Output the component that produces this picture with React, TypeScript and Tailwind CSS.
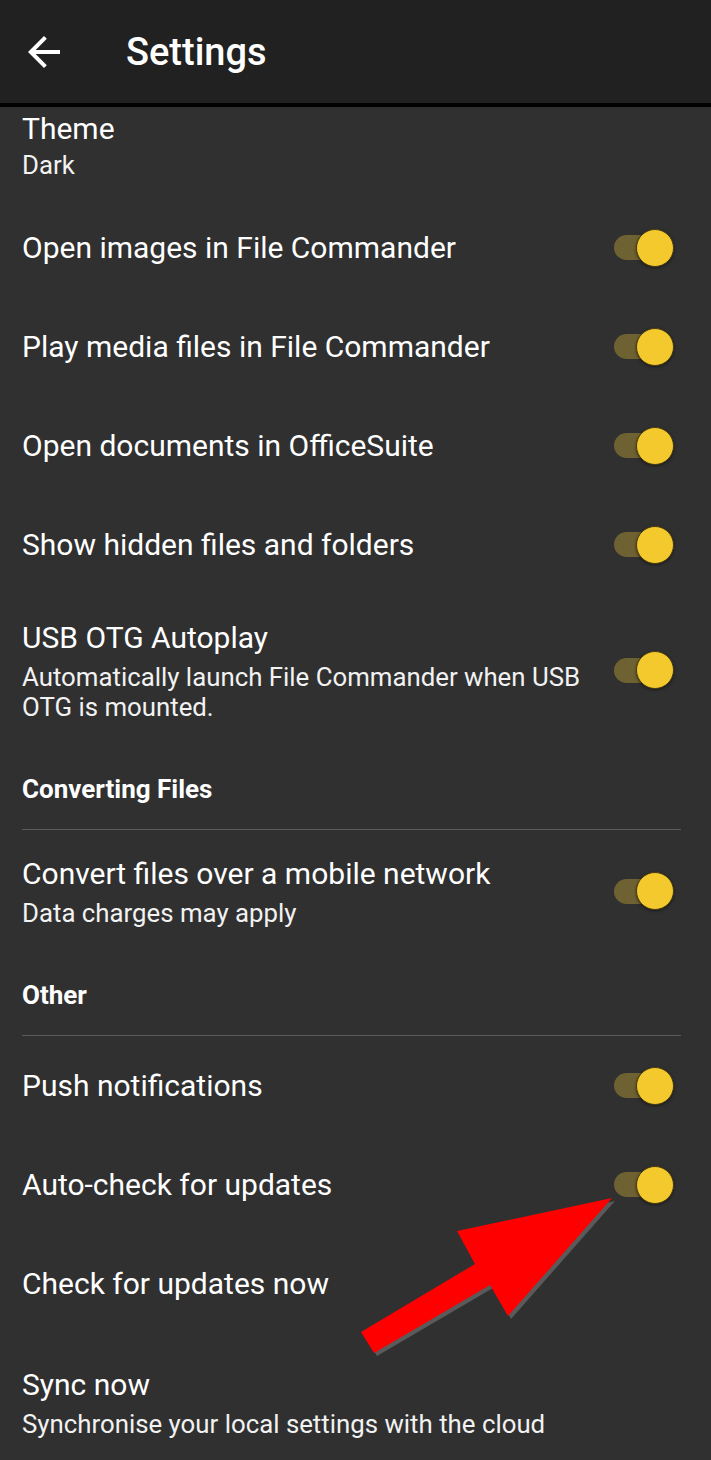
import type { ReactNode } from 'react';

type Row =
  | { kind: 'toggle'; title: string; sub?: string }
  | { kind: 'plain'; title: string; sub?: string }
  | { kind: 'header'; title: string };

function Toggle() {
  return (
    <div className="relative w-[60px] h-[38px] flex items-center shrink-0">
      <div className="w-[56px] h-[25px] rounded-full bg-[#6f6232]" />
      <div className="absolute right-0 top-0 w-[38px] h-[38px] rounded-full bg-[#f3c92d] border border-[#4a3d10] shadow-[0_1px_3px_rgba(0,0,0,0.5)]" />
    </div>
  );
}

function Title({ children }: { children: ReactNode }) {
  return <div className="text-[30px] leading-[40px] text-white">{children}</div>;
}

function Sub({ children }: { children: ReactNode }) {
  return <div className="text-[25.8px] leading-[30px] text-[#f2f2f2]">{children}</div>;
}

function ToggleRow({ title, sub }: { title: string; sub?: string }) {
  if (!sub) {
    return (
      <div className="h-[99px] flex items-center justify-between pl-[22px] pr-[37px]">
        <Title>{title}</Title>
        <Toggle />
      </div>
    );
  }
  return (
    <div className="flex items-center justify-between pl-[22px] pr-[37px] pt-[24px] pb-[24px] gap-4">
      <div className="flex flex-col gap-1">
        <Title>{title}</Title>
        <Sub>{sub}</Sub>
      </div>
      <Toggle />
    </div>
  );
}

function CategoryHeader({ title }: { title: string }) {
  return (
    <div className="pt-[28px] px-[22px]">
      <div className="text-[26px] leading-[30px] font-bold text-white pb-[25px] border-b border-[#5a5a5a] mr-[8px]">
        {title}
      </div>
    </div>
  );
}

const rows: Row[] = [
  { kind: 'toggle', title: 'Open images in File Commander' },
  { kind: 'toggle', title: 'Play media files in File Commander' },
  { kind: 'toggle', title: 'Open documents in OfficeSuite' },
  { kind: 'toggle', title: 'Show hidden files and folders' },
  {
    kind: 'toggle',
    title: 'USB OTG Autoplay',
    sub: 'Automatically launch File Commander when USB OTG is mounted.',
  },
  { kind: 'header', title: 'Converting Files' },
  { kind: 'toggle', title: 'Convert files over a mobile network', sub: 'Data charges may apply' },
  { kind: 'header', title: 'Other' },
  { kind: 'toggle', title: 'Push notifications' },
  { kind: 'toggle', title: 'Auto-check for updates' },
  { kind: 'plain', title: 'Check for updates now' },
  { kind: 'plain', title: 'Sync now', sub: 'Synchronise your local settings with the cloud' },
];

export default function App() {
  return (
    <div
      className="relative w-[711px] h-[1460px] overflow-hidden bg-[#303030]"
      style={{ fontFamily: 'Roboto, "Noto Sans", sans-serif' }}
    >
      {/* toolbar */}
      <header className="h-[107px] bg-[#212121] border-b-4 border-black flex items-center">
        <div className="w-[126px] flex items-center pl-[20px]">
          <svg width="48" height="48" viewBox="0 0 24 24" fill="#ffffff">
            <path d="M20 11H7.83l5.59-5.59L12 4l-8 8 8 8 1.41-1.41L7.83 13H20v-2z" />
          </svg>
        </div>
        <h1 className="text-[38px] font-medium text-white leading-none">Settings</h1>
      </header>

      {/* theme (scrolled partly) */}
      <div className="h-[91px] pl-[22px] pt-[4px]">
        <div className="text-[30px] leading-[36px] text-white">Theme</div>
        <div className="text-[25.8px] leading-[36px] text-[#f2f2f2]">Dark</div>
      </div>

      {rows.map((r, i) => {
        if (r.kind === 'header') return <CategoryHeader key={i} title={r.title} />;
        if (r.kind === 'toggle') return <ToggleRow key={i} title={r.title} sub={r.sub} />;
        if (!r.sub) {
          return (
            <div key={i} className="h-[99px] flex items-center pl-[22px]">
              <Title>{r.title}</Title>
            </div>
          );
        }
        return (
          <div key={i} className="pl-[22px] pt-[32px] flex flex-col gap-1">
            <Title>{r.title}</Title>
            <Sub>{r.sub}</Sub>
          </div>
        );
      })}

      {/* annotation arrow */}
      <svg className="absolute left-0 top-0 pointer-events-none" width="711" height="1460">
        <polygon
          points="364,1335 478,1267 460,1234 615,1201 511,1319 493,1288 377,1356"
          fill="#5a5a5a"
        />
        <polygon
          points="361,1332 475,1264 457,1231 612,1198 508,1316 490,1285 374,1353"
          fill="#ff0000"
        />
      </svg>
    </div>
  );
}
